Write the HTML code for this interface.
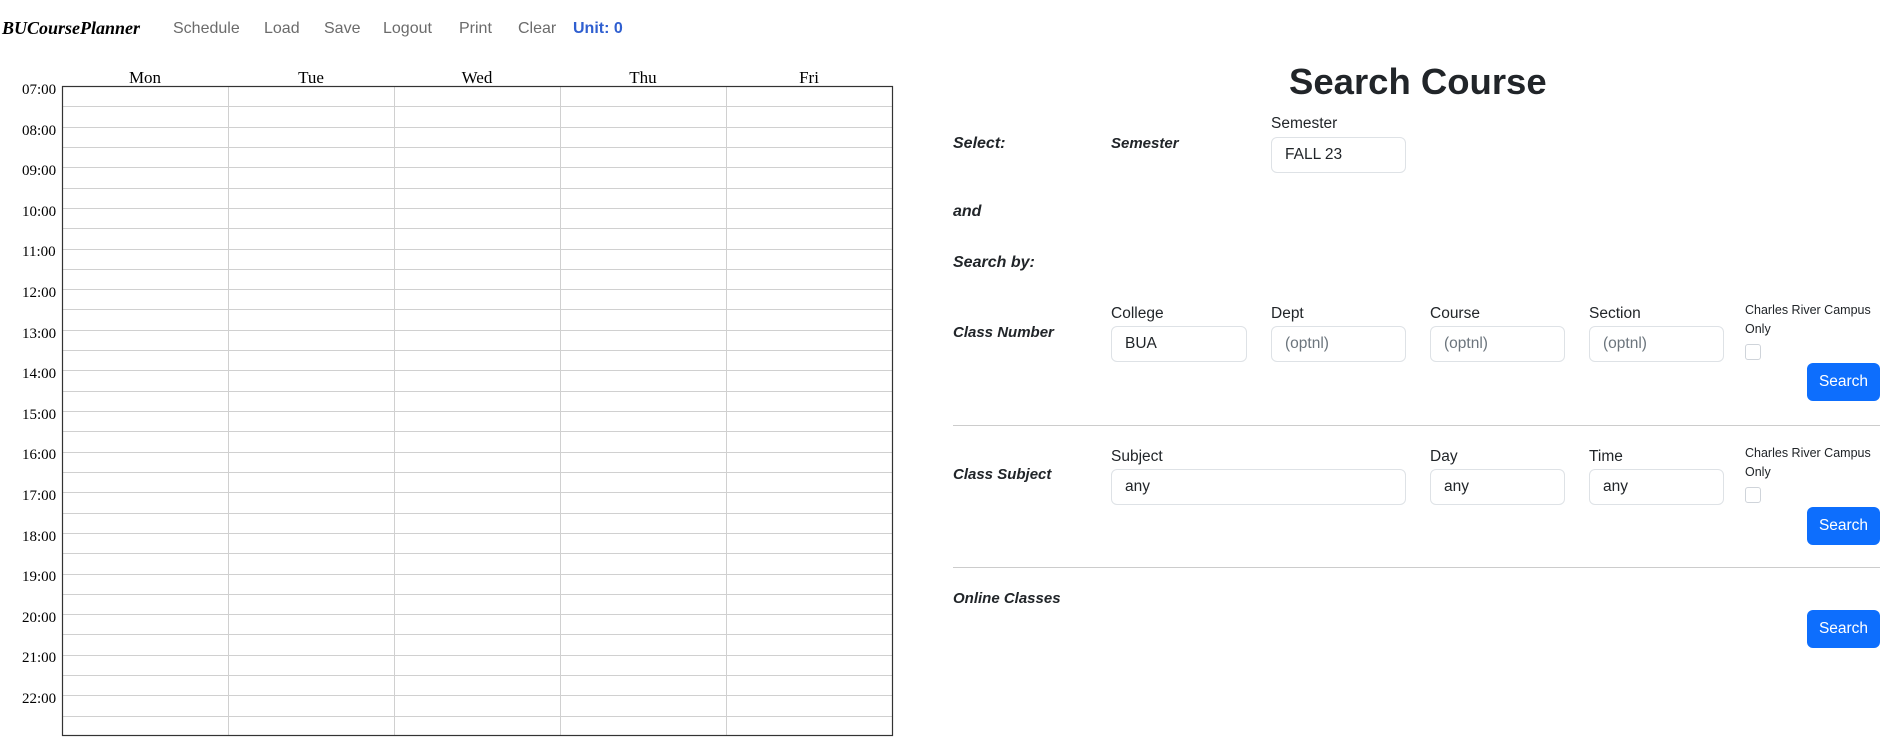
<!DOCTYPE html>
<html><head><style>
body{margin:0;width:1891px;height:754px;background:#fff;font-family:"Liberation Sans",sans-serif;color:#212529;position:relative;overflow:hidden}
.a{position:absolute;white-space:nowrap}
.nav{top:20px;font-size:16px;color:#6b6b6b}
.brand{left:2px;top:18px;font-family:"Liberation Serif",serif;font-style:italic;font-weight:bold;font-size:18px;color:#000}
.day{top:68px;font-family:"Liberation Serif",serif;font-size:17px;color:#000;width:166px;text-align:center}
.hr{font-family:"Liberation Serif",serif;font-size:15px;color:#000;left:22px}
.lbl{font-style:italic;font-weight:bold;font-size:16px}
.fl{font-size:15.5px}
.inp{position:absolute;border:1px solid #dee2e6;border-radius:6px;height:36px;box-sizing:border-box;padding:8px 13px;font-size:15.5px;color:#212529}
.ph{color:#6c757d}
.btn{position:absolute;background:#0d6efd;color:#fff;border-radius:6px;width:73px;height:38px;font-size:15.5px;text-align:center;line-height:38px;left:1807px}
.cb{position:absolute;width:14px;height:14px;border:1px solid #cfd4da;border-radius:3px;left:1745px}
.sm{font-size:12.5px;left:1745px}
.hrl{position:absolute;left:953px;width:927px;height:1px;background:#ccc}
</style></head><body>
<div class="a brand">BUCoursePlanner</div>
<div class="a nav" style="left:173px">Schedule</div>
<div class="a nav" style="left:264px">Load</div>
<div class="a nav" style="left:324px">Save</div>
<div class="a nav" style="left:383px">Logout</div>
<div class="a nav" style="left:459px">Print</div>
<div class="a nav" style="left:518px">Clear</div>
<div class="a nav" style="left:573px;color:#2f5fd0;font-weight:bold">Unit: 0</div>

<div class="a day" style="left:62px">Mon</div>
<div class="a day" style="left:228px">Tue</div>
<div class="a day" style="left:394px">Wed</div>
<div class="a day" style="left:560px">Thu</div>
<div class="a day" style="left:726px">Fri</div>

<svg class="a" style="left:0;top:0" width="900" height="754">
<g stroke="#d0d0d0" stroke-width="1">
<line x1="228.5" y1="86" x2="228.5" y2="736"/><line x1="394.5" y1="86" x2="394.5" y2="736"/><line x1="560.5" y1="86" x2="560.5" y2="736"/><line x1="726.5" y1="86" x2="726.5" y2="736"/>
<g id="h"></g>
</g>
<rect x="62.5" y="86.5" width="830" height="649" fill="none" stroke="#333" stroke-width="1.2"/>
</svg>
<script>
var g=document.getElementById('h'),s='';
for(var i=1;i<32;i++){var y=Math.round(86+i*650/32)+.5;s+='<line x1="63" y1="'+y+'" x2="892" y2="'+y+'"/>';}
g.innerHTML=s;
var t='';for(var h=7;h<=22;h++){var y=86+(h-7)*40.6-4;t+='<div class="a hr" style="top:'+y+'px">'+(h<10?'0':'')+h+':00</div>';}
document.write(t);
</script>

<div class="a" style="left:1289px;top:61px;font-size:36.5px;font-weight:bold">Search Course</div>
<div class="a lbl" style="left:953px;top:135px">Select:</div>
<div class="a lbl" style="left:1111px;top:135px;font-size:15px">Semester</div>
<div class="a fl" style="left:1271px;top:115px">Semester</div>
<div class="inp" style="left:1271px;top:137px;width:135px">FALL 23</div>
<div class="a lbl" style="left:953px;top:203px">and</div>
<div class="a lbl" style="left:953px;top:254px">Search by:</div>

<div class="a lbl" style="left:953px;top:324px;font-size:15px">Class Number</div>
<div class="a fl" style="left:1111px;top:305px">College</div>
<div class="a fl" style="left:1271px;top:305px">Dept</div>
<div class="a fl" style="left:1430px;top:305px">Course</div>
<div class="a fl" style="left:1589px;top:305px">Section</div>
<div class="inp" style="left:1111px;top:326px;width:136px">BUA</div>
<div class="inp ph" style="left:1271px;top:326px;width:135px">(optnl)</div>
<div class="inp ph" style="left:1430px;top:326px;width:135px">(optnl)</div>
<div class="inp ph" style="left:1589px;top:326px;width:135px">(optnl)</div>
<div class="a sm" style="top:303px">Charles River Campus</div>
<div class="a sm" style="top:322px">Only</div>
<div class="cb" style="top:344px"></div>
<div class="btn" style="top:363px">Search</div>
<div class="hrl" style="top:425px"></div>

<div class="a lbl" style="left:953px;top:466px;font-size:15px">Class Subject</div>
<div class="a fl" style="left:1111px;top:448px">Subject</div>
<div class="a fl" style="left:1430px;top:448px">Day</div>
<div class="a fl" style="left:1589px;top:448px">Time</div>
<div class="inp" style="left:1111px;top:469px;width:295px">any</div>
<div class="inp" style="left:1430px;top:469px;width:135px">any</div>
<div class="inp" style="left:1589px;top:469px;width:135px">any</div>
<div class="a sm" style="top:446px">Charles River Campus</div>
<div class="a sm" style="top:465px">Only</div>
<div class="cb" style="top:487px"></div>
<div class="btn" style="top:507px">Search</div>
<div class="hrl" style="top:567px"></div>

<div class="a lbl" style="left:953px;top:590px;font-size:15px">Online Classes</div>
<div class="btn" style="top:610px">Search</div>
</body></html>
